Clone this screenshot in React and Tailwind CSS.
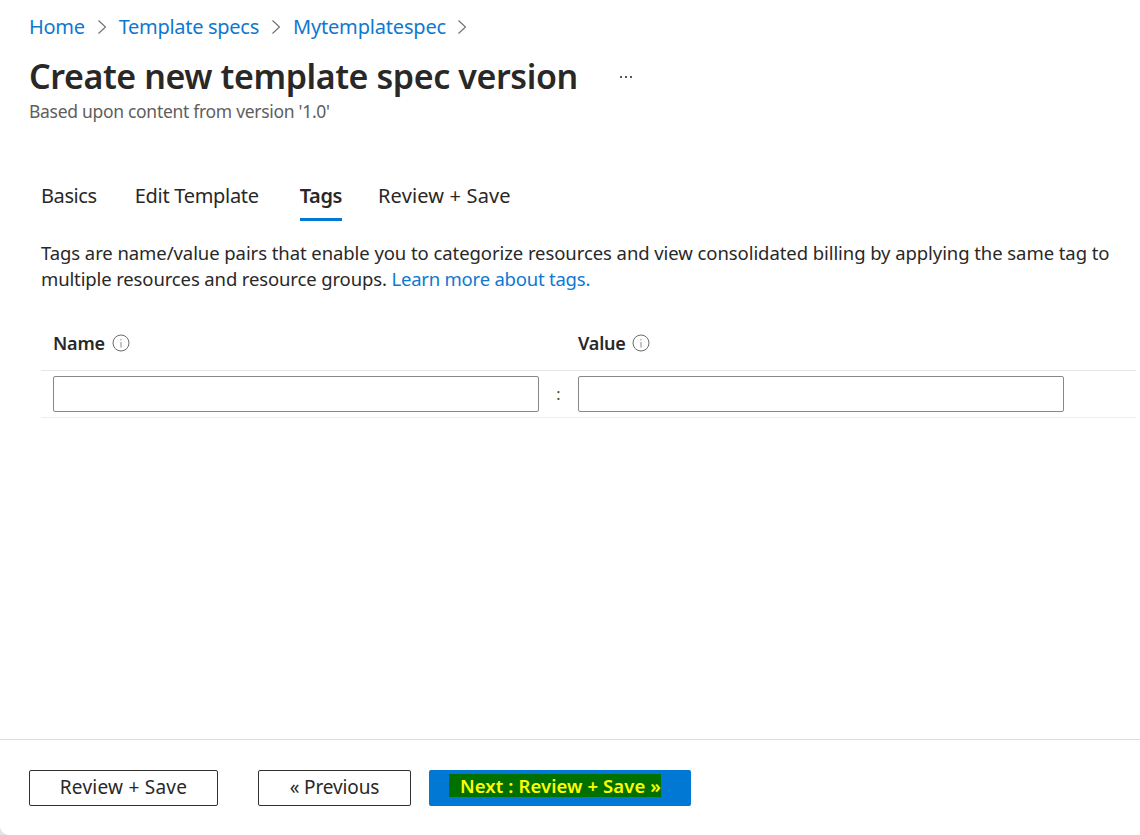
import React from "react";

function Chevron() {
  return (
    <svg width="11" height="16" viewBox="0 0 11 16" fill="none" stroke="#6b6b6b" strokeWidth="1.1" className="shrink-0">
      <path d="M1.5 1.5 L8.5 8 L1.5 14.5" />
    </svg>
  );
}
function Info() {
  return (
    <svg width="18" height="18" viewBox="0 0 18 18" fill="none" className="shrink-0">
      <circle cx="9" cy="9" r="8" stroke="#6b6b6b" strokeWidth="1" />
      <path d="M9 8v5.5M9 5v1.4" stroke="#8a8a8a" strokeWidth="1" />
    </svg>
  );
}
export default function App() {
  return (
    <div className="relative h-[835px] w-[1140px] overflow-hidden bg-white font-['Noto_Sans','Open_Sans',sans-serif] text-[#292827] flex flex-col">
      <div className="pl-[29px] pt-[13px]">
        <nav className="flex items-center h-[28px] text-[20px] tracking-[-0.3px] text-[#0f78d0]">
          <span>Home</span>
          <span className="ml-[12px] mr-[11px] flex"><Chevron /></span>
          <span>Template specs</span>
          <span className="ml-[12px] mr-[11px] flex"><Chevron /></span>
          <span className="tracking-[-0.17px]">Mytemplatespec</span>
          <span className="ml-[11px] flex"><Chevron /></span>
        </nav>
        <div className="mt-[11px] flex items-center h-[48px]">
          <h1 className="text-[34px] font-semibold tracking-[-0.41px] leading-[48px] whitespace-nowrap">Create new template spec version</h1>
          <div className="ml-[42px] mt-[2px] flex gap-[3px]">
            <span className="h-[2px] w-[2px] bg-[#555]"></span>
            <span className="h-[2px] w-[2px] bg-[#555]"></span>
            <span className="h-[2px] w-[2px] bg-[#555]"></span>
          </div>
        </div>
        <p className="text-[17.5px] leading-[23px] tracking-[-0.3px] text-[#605e5c]">Based upon content from version '1.0'</p>
      </div>

      <div className="pl-[41px] pr-[4px] pt-[58px] flex-1">
        <div className="flex text-[20px] tracking-[-0.3px] leading-[30px]">
          <div className="h-[40px] tracking-[-0.4px]">Basics</div>
          <div className="h-[40px] ml-[38px]">Edit Template</div>
          <div className="h-[40px] ml-[41px] tracking-[-0.4px] font-semibold border-b-[3px] border-[#0078d4]">Tags</div>
          <div className="h-[40px] ml-[36px] tracking-[0.16px]">Review + Save</div>
        </div>
        <p className="mt-[19px] text-[18.5px] leading-[26px] tracking-[-0.075px] whitespace-nowrap">
          <span className="block">Tags are name/value pairs that enable you to categorize resources and view consolidated billing by applying the same tag to</span>
          <span className="block tracking-[-0.13px]">multiple resources and resource groups. <span className="text-[#0f78d0] tracking-[-0.22px]">Learn more about tags.</span></span>
        </p>
        <div className="mt-[26px]">
          <div className="flex h-[53px] items-center pl-[12px] border-b border-[#e6e6e6] font-semibold text-[18px] tracking-[-0.2px] pb-[2px]">
            <div className="w-[525px] flex items-center gap-[7px]">Name <Info /></div>
            <div className="flex items-center gap-[6px]">Value <Info /></div>
          </div>
          <div className="flex h-[47px] items-center pl-[12px] border-b border-[#eeeeee]">
            <div className="h-[36px] w-[486px] rounded-[2px] border border-[#8a8886]"></div>
            <div className="w-[39px] text-center text-[16px] leading-none text-[#5c4a2a]">:</div>
            <div className="h-[36px] w-[486px] rounded-[2px] border border-[#8a8886]"></div>
          </div>
        </div>
      </div>

      <div className="h-[96px] border-t border-[#dddddd] pl-[29px] pt-[30px] flex items-start text-[19px]">
        <div className="w-[189px] h-[36px] border border-[#323130] rounded-[2px] flex items-center justify-center tracking-[0.25px] pb-[2px]">Review + Save</div>
        <div className="ml-[40px] w-[153px] h-[36px] border border-[#323130] rounded-[2px] flex items-center justify-center tracking-[-0.12px] pb-[2px]">« Previous</div>
        <div className="ml-[18px] w-[262px] h-[36px] bg-[#0078d4] rounded-[2px] flex items-start pl-[20px] pt-[4px]">
          <span className="bg-[#007000] text-[#ffff00] font-semibold text-[18.5px] leading-[23px] pl-[11px] whitespace-nowrap tracking-[0.1px]">Next : Review + Save »</span>
        </div>
      </div>

      <svg className="absolute left-0 bottom-0" width="8" height="8" viewBox="0 0 8 8">
        <path d="M0 0 Q1 6 8 8 H0 Z" fill="#e4e4e4" />
      </svg>
    </div>
  );
}
